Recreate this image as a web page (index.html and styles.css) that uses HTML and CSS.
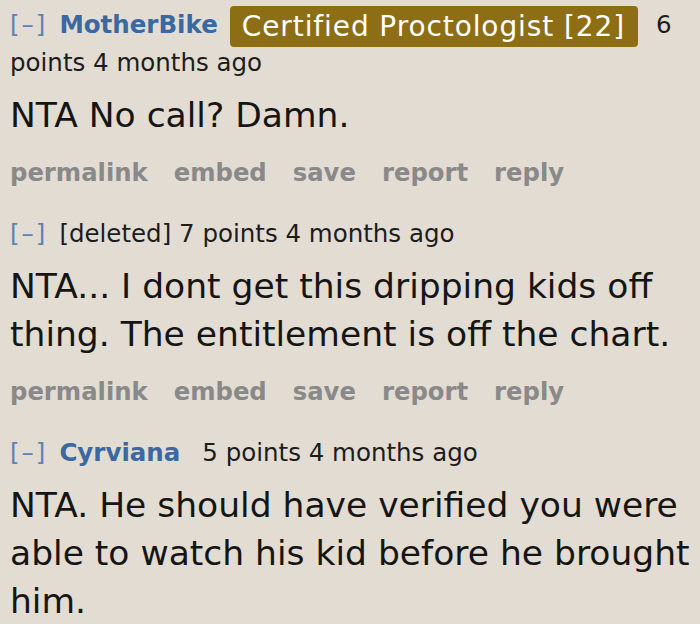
FILE: index.html
```html
<!DOCTYPE html>
<html>
<head>
<meta charset="utf-8">
<link rel="stylesheet" href="styles.css">
</head>
<body>
<div class="thread">
  <div class="comment">
    <p class="tagline"><span class="expand">[–]</span><span class="author">MotherBike</span><span class="flair">Certified Proctologist [22]</span><span class="score">6</span> <span class="score">points</span> <span class="time">4 months ago</span></p>
    <div class="md"><p>NTA No call? Damn.</p></div>
    <ul class="buttons"><li>permalink</li><li>embed</li><li>save</li><li>report</li><li>reply</li></ul>
  </div>
  <div class="comment">
    <p class="tagline"><span class="expand">[–]</span><span class="deleted">[deleted]</span> <span class="score">7 points</span> <span class="time">4 months ago</span></p>
    <div class="md"><p>NTA... I dont get this dripping kids off thing. The entitlement is off the chart.</p></div>
    <ul class="buttons"><li>permalink</li><li>embed</li><li>save</li><li>report</li><li>reply</li></ul>
  </div>
  <div class="comment">
    <p class="tagline"><span class="expand">[–]</span><span class="author author-gap">Cyrviana</span><span class="score">5 points</span> <span class="time">4 months ago</span></p>
    <div class="md"><p>NTA. He should have verified you were able to watch his kid before he brought him.</p></div>
  </div>
</div>
</body>
</html>
```
FILE: styles.css
```css
html, body {
  margin: 0;
  padding: 0;
  background: #e2dcd3;
}
body {
  width: 700px;
  height: 624px;
  overflow: hidden;
  font-family: "DejaVu Sans", Verdana, sans-serif;
  color: #1c1c1c;
}
.thread {
  padding: 6px 0 0 10px;
}
.comment {
  margin-bottom: 29px;
}
.tagline {
  margin: 0;
  font-size: 24.5px;
  line-height: 32px;
  color: #1c1c1c;
}
.expand {
  color: #5d82b5;
  letter-spacing: 2px;
  margin-right: 12px;
}
.author {
  color: #3a68a1;
  font-weight: bold;
  margin-right: 12px;
}
.author-gap {
  margin-right: 22px;
}
.deleted {
  color: #1c1c1c;
}
.flair {
  display: inline-block;
  vertical-align: -3px;
  background: #8e6e15;
  color: #ffffff;
  font-size: 28px;
  letter-spacing: 0.9px;
  line-height: 29px;
  padding: 6px 13px 6px 12px;
  border-radius: 4px;
  margin-right: 18px;
}
.md {
  margin-top: 12px;
  font-size: 34.5px;
  line-height: 48px;
  color: #151515;
}
.md p {
  margin: 0;
}
.buttons {
  list-style: none;
  margin: 18px 0 0 0;
  padding: 0;
  display: flex;
  gap: 26px;
  font-size: 24.3px;
  line-height: 32px;
  font-weight: bold;
  color: #898989;
}
```
